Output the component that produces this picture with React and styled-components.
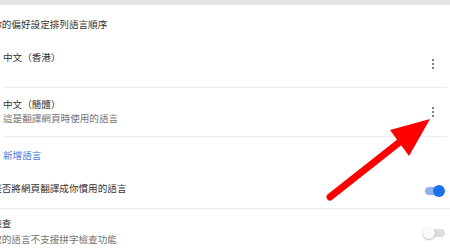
import React from "react";
import styled, { createGlobalStyle } from "styled-components";

const GlobalStyle = createGlobalStyle`
  html, body { margin: 0; padding: 0; background: #fff; }
  body {
    font-family: "Noto Sans CJK TC", "Noto Sans", sans-serif;
    width: 450px;
    height: 251px;
    overflow: hidden;
  }
`;

const Page = styled.div`
  position: relative;
  width: 450px;
  height: 251px;
  overflow: hidden;
  background: #fff;
`;

const TopBar = styled.div`
  height: 5px;
  background: linear-gradient(#e2e2e2, #e6e6e6);
`;

const Text = styled.div`
  font-size: 9.6px;
  line-height: 14px;
  white-space: nowrap;
  color: ${(p) => (p.$muted ? "#747474" : "#333")};
`;

const Intro = styled(Text)`
  margin-left: -27px;
  padding-top: 12px;
`;

const LangList = styled.div`
  margin: 0 3px;
`;

const Row = styled.div`
  display: flex;
  justify-content: space-between;
  align-items: flex-start;
  box-sizing: border-box;
  height: ${(p) => p.$h}px;
  padding-top: ${(p) => p.$pt}px;
  border-bottom: ${(p) => (p.$divider ? "1px solid #ededed" : "none")};
`;

const SettingRow = styled(Row)`
  margin-left: -27px;
  padding-right: 5px;
`;

const Labels = styled.div`
  display: flex;
  flex-direction: column;
  gap: ${(p) => p.$gap || 0}px;
`;

const MoreButton = styled.div`
  width: 16px;
  height: 16px;
  margin-top: ${(p) => p.$mt}px;
  margin-right: 6px;
  display: flex;
  flex-direction: column;
  align-items: center;
  justify-content: center;
  gap: 2px;
`;

const Dot = styled.span`
  width: 2.3px;
  height: 2.3px;
  border-radius: 50%;
  background: #555;
`;

const AddLink = styled(Text)`
  box-sizing: border-box;
  height: 25px;
  padding: 11px 3px 0;
  color: #3f7be0;
`;

const Toggle = styled.div`
  position: relative;
  width: 22px;
  height: 12px;
  margin-top: ${(p) => p.$mt}px;
`;

const Track = styled.div`
  position: absolute;
  left: 2px;
  right: ${(p) => (p.$on ? "3px" : "0")};
  top: 2px;
  height: 8px;
  border-radius: 4px;
  background: ${(p) => (p.$on ? "#8db3f2" : "#dedede")};
`;

const Knob = styled.div`
  position: absolute;
  top: 0;
  ${(p) => (p.$on ? "right: 0;" : "left: 0;")}
  width: 12px;
  height: 12px;
  border-radius: 50%;
  background: ${(p) => (p.$on ? "#1a73e8" : "#fafafa")};
  box-shadow: ${(p) => (p.$on ? "none" : "0 1px 2px rgba(0,0,0,0.28)")};
`;

const ArrowLayer = styled.svg`
  position: absolute;
  left: 0;
  top: 0;
  pointer-events: none;
`;

function More({ mt }) {
  return (
    <MoreButton $mt={mt}>
      <Dot />
      <Dot />
      <Dot />
    </MoreButton>
  );
}

function Switch({ on, mt }) {
  return (
    <Toggle $mt={mt}>
      <Track $on={on} />
      <Knob $on={on} />
    </Toggle>
  );
}

export default function App() {
  return (
    <Page>
      <GlobalStyle />
      <TopBar />
      <Intro>根據你的偏好設定排列語言順序</Intro>
      <LangList>
        <Row $h={57} $pt={19} $divider>
          <Labels>
            <Text>中文（香港）</Text>
          </Labels>
          <More mt={6} />
        </Row>
        <Row $h={49} $pt={9} $divider>
          <Labels>
            <Text>中文（簡體）</Text>
            <Text $muted>這是翻譯網頁時使用的語言</Text>
          </Labels>
          <More mt={7} />
        </Row>
      </LangList>
      <AddLink>新增語言</AddLink>
      <SettingRow $h={47} $pt={19} $divider>
        <Labels>
          <Text>詢問是否將網頁翻譯成你慣用的語言</Text>
        </Labels>
        <Switch on mt={4} />
      </SettingRow>
      <SettingRow $h={42} $pt={7}>
        <Labels $gap={2}>
          <Text>拼字檢查</Text>
          <Text $muted>你選取的語言不支援拼字檢查功能</Text>
        </Labels>
        <Switch mt={11} />
      </SettingRow>
      <ArrowLayer width="450" height="251" viewBox="0 0 450 251">
        <line x1="330" y1="197" x2="401" y2="141" stroke="#ff0000" strokeWidth="7" strokeLinecap="round" />
        <polygon points="430,119 390,130 409,156" fill="#ff0000" />
      </ArrowLayer>
    </Page>
  );
}
